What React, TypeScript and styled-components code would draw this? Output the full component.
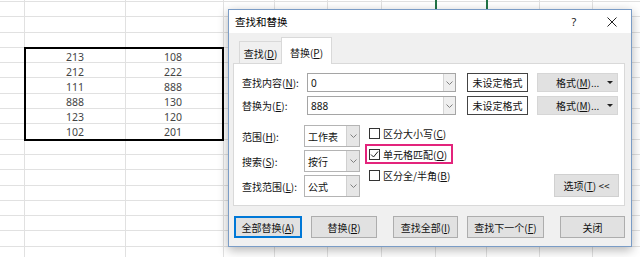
import styled, { createGlobalStyle, css } from 'styled-components';

const COLS = [25, 101, 98, 51, 53, 54, 54, 51, 53, 53, 53];
const ROW_COUNT = 17;
const NUMBERS: [number, number][] = [
  [213, 108],
  [212, 222],
  [111, 888],
  [888, 130],
  [123, 120],
  [102, 201],
];

const GlobalStyle = createGlobalStyle`
  html, body {
    margin: 0;
    padding: 0;
    background: #fff;
  }
  body {
    font-family: "Noto Sans CJK SC", "Noto Sans", sans-serif;
  }
  * {
    box-sizing: border-box;
  }
`;

function Chevron() {
  return (
    <svg width="7" height="4" viewBox="0 0 7 4">
      <path d="M0.5 0.5 L3.5 3.5 L6.5 0.5" stroke="#808080" fill="none" />
    </svg>
  );
}

function App() {
  const cells = Array.from({ length: (ROW_COUNT + 1) * COLS.length });

  return (
    <Page>
      <GlobalStyle />
      <Sheet>
        <Gridlines>
          {cells.map((_, i) => (
            <GridCell key={i} />
          ))}
        </Gridlines>
        <Overlay>
          <ActiveCell />
          <RangeBox>
            {NUMBERS.flat().map((n, i) => (
              <NumCell key={i}>{n}</NumCell>
            ))}
          </RangeBox>
        </Overlay>
      </Sheet>

      <Dialog>
        <TitleBar>
          <Title>查找和替换</Title>
          <TitleButtons>
            <TitleButton>?</TitleButton>
            <TitleButton>
              <svg width="10" height="10" viewBox="0 0 10 10">
                <path d="M0.5 0.5 L9.5 9.5 M9.5 0.5 L0.5 9.5" stroke="#222" strokeWidth="1" />
              </svg>
            </TitleButton>
          </TitleButtons>
        </TitleBar>

        <Body>
          <TabStrip>
            <Tab>
              查找(<u>D</u>)
            </Tab>
            <Tab $active>
              替换(<u>P</u>)
            </Tab>
          </TabStrip>

          <Panel>
            <FieldRows>
              <FieldRow>
                <Label $w={65}>
                  查找内容(<u>N</u>):
                </Label>
                <ComboInput>
                  <InputText>0</InputText>
                  <ComboArrow>
                    <Chevron />
                  </ComboArrow>
                </ComboInput>
                <FormatTag>未设定格式</FormatTag>
                <FormatButton>
                  <span>
                    格式(<u>M</u>)...
                  </span>
                  <Caret />
                </FormatButton>
              </FieldRow>
              <FieldRow>
                <Label $w={65}>
                  替换为(<u>E</u>):
                </Label>
                <ComboInput>
                  <InputText>888</InputText>
                  <ComboArrow>
                    <Chevron />
                  </ComboArrow>
                </ComboInput>
                <FormatTag>未设定格式</FormatTag>
                <FormatButton>
                  <span>
                    格式(<u>M</u>)...
                  </span>
                  <Caret />
                </FormatButton>
              </FieldRow>
            </FieldRows>

            <Options>
              <SelectCol>
                <SelectRow>
                  <Label $w={62}>
                    范围(<u>H</u>):
                  </Label>
                  <Select>
                    <SelectText>工作表</SelectText>
                    <SelectArrow>
                      <Chevron />
                    </SelectArrow>
                  </Select>
                </SelectRow>
                <SelectRow>
                  <Label $w={62}>
                    搜索(<u>S</u>):
                  </Label>
                  <Select>
                    <SelectText>按行</SelectText>
                    <SelectArrow>
                      <Chevron />
                    </SelectArrow>
                  </Select>
                </SelectRow>
                <SelectRow>
                  <Label $w={62}>
                    查找范围(<u>L</u>):
                  </Label>
                  <Select>
                    <SelectText>公式</SelectText>
                    <SelectArrow>
                      <Chevron />
                    </SelectArrow>
                  </Select>
                </SelectRow>
              </SelectCol>

              <CheckCol>
                <CheckRow>
                  <CheckBox />
                  <span>
                    区分大小写(<u>C</u>)
                  </span>
                </CheckRow>
                <CheckRow $highlight>
                  <CheckBox>
                    <svg width="9" height="9" viewBox="0 0 9 9">
                      <path d="M1 4.5 L3.5 7 L8 1.5" stroke="#222" strokeWidth="1" fill="none" />
                    </svg>
                  </CheckBox>
                  <span>
                    单元格匹配(<u>O</u>)
                  </span>
                </CheckRow>
                <CheckRow>
                  <CheckBox />
                  <span>
                    区分全/半角(<u>B</u>)
                  </span>
                </CheckRow>
              </CheckCol>

              <OptionsButton>
                选项(<u>T</u>) &lt;&lt;
              </OptionsButton>
            </Options>
          </Panel>

          <Footer>
            <ButtonGroup>
              <Button $w={68} $default>
                全部替换(<u>A</u>)
              </Button>
              <Button $w={66}>
                替换(<u>R</u>)
              </Button>
            </ButtonGroup>
            <ButtonGroup>
              <Button $w={65}>
                查找全部(<u>I</u>)
              </Button>
              <Button $w={77}>
                查找下一个(<u>F</u>)
              </Button>
            </ButtonGroup>
            <Button $w={66}>关闭</Button>
          </Footer>
        </Body>
      </Dialog>
    </Page>
  );
}

const Page = styled.div`
  position: relative;
  width: 640px;
  height: 257px;
  overflow: hidden;
  background: #fff;
`;

const sheetTemplate = css`
  display: grid;
  grid-template-columns: ${COLS.map((w) => `${w}px`).join(' ')};
  grid-template-rows: 2px repeat(${ROW_COUNT}, 15.3px);
`;

const Sheet = styled.div`
  display: grid;
  > * {
    grid-area: 1 / 1;
  }
`;

const Gridlines = styled.div`
  ${sheetTemplate}
`;

const Overlay = styled.div`
  ${sheetTemplate}
`;

const GridCell = styled.div`
  border-right: 1px solid #e1e1e1;
  border-bottom: 1px solid #e1e1e1;
`;

const ActiveCell = styled.div`
  grid-column: 8 / 9;
  grid-row: 1 / 3;
  margin: -2px -1px 0 -1px;
  border: 2px solid #217346;
`;

const RangeBox = styled.div`
  grid-column: 2 / 4;
  grid-row: 5 / 11;
  margin: -1px 0 -1px -1px;
  border: 2px solid #000;
  display: grid;
  grid-template-columns: 1fr 1fr;
  grid-template-rows: repeat(6, 1fr);
`;

const NumCell = styled.div`
  display: flex;
  align-items: flex-end;
  justify-content: center;
  font-family: "Noto Sans", "Liberation Sans", sans-serif;
  font-size: 10.5px;
  line-height: 1;
  color: #444;
  padding-bottom: 1px;
`;

const Dialog = styled.div`
  position: absolute;
  left: 228px;
  top: 9px;
  width: 404px;
  height: 238px;
  border: 1px solid #7a9cc6;
  background: #f0f0f0;
  box-shadow: 0 3px 10px rgba(0, 0, 0, 0.3);
  display: flex;
  flex-direction: column;
  font-size: 10px;
  color: #111;
`;

const TitleBar = styled.div`
  height: 23px;
  flex-shrink: 0;
  background: #fff;
  display: flex;
  align-items: center;
  padding-left: 6px;
`;

const Title = styled.span`
  font-size: 10.5px;
  color: #000;
`;

const TitleButtons = styled.div`
  margin-left: auto;
  display: flex;
  height: 100%;
`;

const TitleButton = styled.div`
  width: 38px;
  height: 100%;
  display: flex;
  align-items: center;
  justify-content: center;
  font-family: "Noto Sans", sans-serif;
  font-size: 11px;
  color: #222;
`;

const Body = styled.div`
  flex: 1;
  padding: 4px 6px 0 4px;
  display: flex;
  flex-direction: column;
`;

const TabStrip = styled.div`
  display: flex;
  align-items: flex-end;
  height: 26px;
  padding-left: 6px;
`;

const Tab = styled.div<{ $active?: boolean }>`
  position: relative;
  z-index: ${(p) => (p.$active ? 1 : 0)};
  width: ${(p) => (p.$active ? 51 : 43)}px;
  height: ${(p) => (p.$active ? 27 : 22)}px;
  margin-bottom: ${(p) => (p.$active ? -1 : 0)}px;
  margin-left: ${(p) => (p.$active ? -1 : 0)}px;
  padding-top: ${(p) => (p.$active ? 3 : 1)}px;
  border: 1px solid #d9d9d9;
  border-bottom: none;
  background: ${(p) => (p.$active ? '#fff' : '#f0f0f0')};
  display: flex;
  align-items: center;
  justify-content: center;
`;

const Panel = styled.div`
  height: 143px;
  background: #fff;
  border: 1px solid #d9d9d9;
  padding: 9px 5px 8px 8px;
  display: flex;
  flex-direction: column;
`;

const FieldRows = styled.div`
  display: flex;
  flex-direction: column;
  gap: 4px;
`;

const FieldRow = styled.div`
  display: flex;
  align-items: center;
  height: 19px;
`;

const Label = styled.div<{ $w: number }>`
  width: ${(p) => p.$w}px;
  flex-shrink: 0;
  white-space: nowrap;
`;

const ComboInput = styled.div`
  width: 149px;
  height: 19px;
  border: 1px solid #a5a5a5;
  display: flex;
`;

const InputText = styled.div`
  flex: 1;
  padding-left: 3px;
  display: flex;
  align-items: center;
  font-family: "Noto Sans", sans-serif;
`;

const ComboArrow = styled.div`
  width: 12px;
  background: #efefef;
  border-left: 1px solid #d4d4d4;
  display: flex;
  align-items: center;
  justify-content: center;
`;

const FormatTag = styled.div`
  margin-left: 11px;
  width: 61px;
  height: 19px;
  border: 1px solid #444;
  background: #fff;
  display: flex;
  align-items: center;
  justify-content: center;
`;

const FormatButton = styled.div`
  margin-left: 9px;
  width: 81px;
  height: 19px;
  background: #e1e1e1;
  border: 1px solid #d6d6d6;
  display: flex;
  align-items: center;
  padding: 0 4px 0 18px;
  span {
    flex: 1;
  }
`;

const Caret = styled.div`
  width: 0;
  height: 0;
  border-left: 3px solid transparent;
  border-right: 3px solid transparent;
  border-top: 3px solid #222;
`;

const Options = styled.div`
  margin-top: 10px;
  display: flex;
  align-items: flex-start;
`;

const SelectCol = styled.div`
  display: flex;
  flex-direction: column;
  gap: 3px;
`;

const SelectRow = styled.div`
  display: flex;
  align-items: center;
  height: 22px;
`;

const Select = styled.div`
  width: 56px;
  height: 22px;
  border: 1px solid #b4b4b4;
  display: flex;
`;

const SelectText = styled.div`
  flex: 1;
  padding-left: 3px;
  display: flex;
  align-items: center;
`;

const SelectArrow = styled.div`
  width: 13px;
  background: #e6e6e6;
  border-left: 1px solid #d0d0d0;
  display: flex;
  align-items: center;
  justify-content: center;
`;

const CheckCol = styled.div`
  margin-left: 5px;
  margin-top: -2px;
  display: flex;
  flex-direction: column;
  gap: 1px;
`;

const CheckRow = styled.div<{ $highlight?: boolean }>`
  width: 88px;
  height: 20px;
  border: 2px solid ${(p) => (p.$highlight ? '#e3247c' : 'transparent')};
  padding-left: 2px;
  display: flex;
  align-items: center;
  gap: 3px;
  white-space: nowrap;
`;

const CheckBox = styled.div`
  width: 11px;
  height: 11px;
  flex-shrink: 0;
  border: 1px solid #333;
  background: #fff;
  display: flex;
  align-items: center;
  justify-content: center;
`;

const OptionsButton = styled.div`
  margin-left: auto;
  align-self: flex-end;
  width: 65px;
  height: 23px;
  background: #e1e1e1;
  border: 1px solid #d0d0d0;
  display: flex;
  align-items: center;
  justify-content: center;
  white-space: pre;
`;

const Footer = styled.div`
  margin-top: 10px;
  padding-left: 1px;
  display: flex;
  gap: 16px;
`;

const ButtonGroup = styled.div`
  display: flex;
  gap: 9px;
`;

const Button = styled.div<{ $w: number; $default?: boolean }>`
  width: ${(p) => p.$w}px;
  height: 22px;
  background: #e1e1e1;
  border: 1px solid ${(p) => (p.$default ? '#0078d7' : '#adadad')};
  box-shadow: ${(p) => (p.$default ? 'inset 0 0 0 1px #0078d7' : 'none')};
  display: flex;
  align-items: center;
  justify-content: center;
  white-space: nowrap;
`;

export default App;
